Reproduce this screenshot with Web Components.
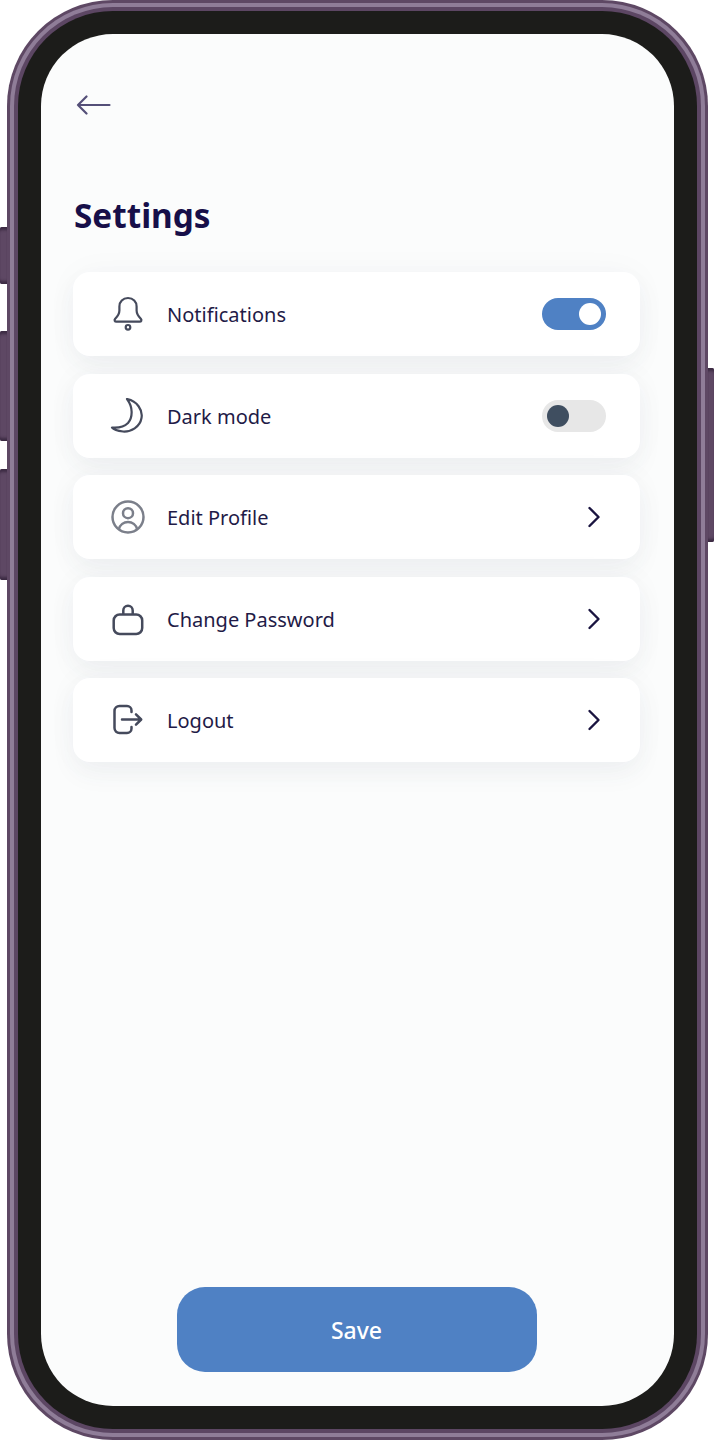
<!DOCTYPE html>
<html>
<head>
<meta charset="utf-8">
<title>Settings</title>
<style>
  html, body { margin: 0; padding: 0; background: #fff; }
  body { font-family: "Noto Sans", "Open Sans", sans-serif; }
</style>
</head>
<body>
<phone-frame>
  <settings-page>
    <settings-row label="Notifications">
      <svg slot="icon" width="36" height="36" viewBox="0 0 36 36" fill="none" stroke="#454a5c" stroke-width="2.200" stroke-linejoin="round">
        <path d="M18 2c-5.200 0-8.600 3.800-8.600 8.400v4.200c0 3.200-2 6-4.200 8.200-1.200 1.300-.5 2.900 1.200 2.900h23.200c1.700 0 2.400-1.600 1.200-2.900-2.200-2.200-4.200-5-4.200-8.200v-4.200C26.600 5.800 23.200 2 18 2z"/>
        <circle cx="18" cy="31.300" r="2.300"/>
      </svg>
      <toggle-switch slot="action" on></toggle-switch>
    </settings-row>
    <settings-row label="Dark mode">
      <svg slot="icon" width="36" height="36" viewBox="0 0 36 36" fill="none" stroke="#454a5c" stroke-width="2.200" stroke-linejoin="round">
        <path d="M17 1C27 3 33 12 31.500 20 30 29 21 34 13 33.500 8 33 4 32 2 29.500 8 30 14 29 18 25 23 19 23 9 17 1z"/>
      </svg>
      <toggle-switch slot="action"></toggle-switch>
    </settings-row>
    <settings-row label="Edit Profile">
      <svg slot="icon" width="36" height="36" viewBox="0 0 36 36" fill="none" stroke="#7b7f8a" stroke-width="2.500">
        <circle cx="18" cy="18" r="15.500"/>
        <circle cx="18" cy="14.200" r="5"/>
        <path d="M8.800 30.500c1-4.700 5-7.500 9.200-7.500s8.200 2.800 9.200 7.500"/>
      </svg>
      <row-chevron slot="action"></row-chevron>
    </settings-row>
    <settings-row label="Change Password">
      <svg slot="icon" width="36" height="36" viewBox="0 0 36 36" fill="none" stroke="#454a5c" stroke-width="2.500">
        <rect x="3.700" y="13.500" width="28.500" height="19.500" rx="6"/>
        <path d="M13.300 13.500v-4a4.700 4.700 0 0 1 9.400 0v4"/>
      </svg>
      <row-chevron slot="action"></row-chevron>
    </settings-row>
    <settings-row label="Logout">
      <svg slot="icon" width="36" height="36" viewBox="0 0 36 36" fill="none" stroke="#454a5c" stroke-width="2.500" stroke-linecap="round" stroke-linejoin="round">
        <path d="M21.500 10V8.500A4.500 4.500 0 0 0 17 4H9.500a5 5 0 0 0-5 5v17a5 5 0 0 0 5 5H17a4.500 4.500 0 0 0 4.500-4.500V25"/>
        <path d="M12 17.500h19M26 12.300l5.200 5.200-5.200 5.200"/>
      </svg>
      <row-chevron slot="action"></row-chevron>
    </settings-row>
    <save-button slot="footer">Save</save-button>
  </settings-page>
</phone-frame>

<script>
class PhoneFrame extends HTMLElement {
  constructor() {
    super();
    this.attachShadow({ mode: 'open' }).innerHTML = `
      <style>
        :host { display: block; position: relative; box-sizing: border-box; width: 701px; height: 1440px; margin-left: 7px; }
        .band { box-sizing: border-box; height: 100%; }
        .outer { background: #5e4864; border-radius: 106px; padding: 3px; }
        .light { background: #8f7d98; border-radius: 103px; padding: 4px; }
        .inner { background: #5c4663; border-radius: 99px; padding: 4px; }
        .bezel { background: #1c1c1a; border-radius: 95px; padding: 23px; }
        .screen { height: 100%; border-radius: 72px; overflow: hidden; background: #fbfcfc; }
        .side { position: absolute; width: 7px; background: #5e4864; box-shadow: inset 0 5px 3px -2px #3c2b43, inset 0 -5px 3px -2px #3c2b43; }
        .left { left: -7px; border-radius: 2px 0 0 2px; }
        .right { right: -6px; width: 6px; border-radius: 0 2px 2px 0; }
      </style>
      <div class="side left" style="top:227px;height:57px"></div>
      <div class="side left" style="top:331px;height:110px"></div>
      <div class="side left" style="top:469px;height:111px"></div>
      <div class="side right" style="top:368px;height:174px"></div>
      <div class="band outer"><div class="band light"><div class="band inner"><div class="band bezel">
        <div class="screen"><slot></slot></div>
      </div></div></div></div>`;
  }
}

class SettingsPage extends HTMLElement {
  constructor() {
    super();
    this.attachShadow({ mode: 'open' }).innerHTML = `
      <style>
        :host { display: flex; flex-direction: column; box-sizing: border-box; height: 100%; padding: 61px 34px 34px 32px; }
        .back { display: block; margin-left: 3px; }
        h1 { margin: 77px 0 0 1px; font: 700 33.300px/46px "Noto Sans", "Open Sans", sans-serif; color: #170f49; }
        .list { display: flex; flex-direction: column; gap: 17.500px; margin-top: 34px; }
        .footer { margin-top: auto; display: flex; justify-content: center; }
      </style>
      <svg class="back" width="36" height="20" viewBox="0 0 36 20" fill="none" stroke="#544f78" stroke-width="2.200" stroke-linecap="round" stroke-linejoin="round">
        <path d="M2 10h31.500M10.500 1.500 2 10l8.500 8.500"/>
      </svg>
      <h1>Settings</h1>
      <div class="list"><slot></slot></div>
      <div class="footer"><slot name="footer"></slot></div>`;
  }
}

class SettingsRow extends HTMLElement {
  constructor() {
    super();
    this.attachShadow({ mode: 'open' }).innerHTML = `
      <style>
        :host { display: flex; align-items: center; box-sizing: border-box; height: 84px; padding: 0 34px 0 37px; background: #fff; border-radius: 17px; box-shadow: 0 0 34px rgba(50, 70, 100, .03), 0 12px 26px rgba(50, 70, 100, .05); }
        .icon { display: flex; width: 36px; height: 36px; flex: none; }
        .label { flex: 1; margin-left: 21px; padding-top: 1px; font-size: 20px; color: #1f1b47; }
      </style>
      <span class="icon"><slot name="icon"></slot></span>
      <span class="label"></span>
      <slot name="action"></slot>`;
    this.shadowRoot.querySelector('.label').textContent = this.getAttribute('label');
  }
}

class ToggleSwitch extends HTMLElement {
  constructor() {
    super();
    this.attachShadow({ mode: 'open' }).innerHTML = `
      <style>
        :host { display: flex; align-items: center; box-sizing: border-box; width: 64px; height: 32px; padding: 0 5px; border-radius: 16px; background: #e7e7e7; }
        :host([on]) { background: #4f81c4; justify-content: flex-end; }
        .knob { width: 22px; height: 22px; border-radius: 50%; background: #3f4e60; }
        :host([on]) .knob { background: #fff; }
      </style>
      <div class="knob"></div>`;
  }
}

class RowChevron extends HTMLElement {
  constructor() {
    super();
    this.attachShadow({ mode: 'open' }).innerHTML = `
      <style>
        :host { display: block; width: 14px; height: 22px; margin-right: 5px; }
        svg { display: block; }
      </style>
      <svg width="14" height="22" viewBox="0 0 14 22" fill="none" stroke="#1a1440" stroke-width="2.400" stroke-linecap="round" stroke-linejoin="round">
        <path d="M2.500 2l9 9-9 9"/>
      </svg>`;
  }
}

class SaveButton extends HTMLElement {
  constructor() {
    super();
    this.attachShadow({ mode: 'open' }).innerHTML = `
      <style>
        :host { display: flex; align-items: center; justify-content: center; box-sizing: border-box; width: 360px; height: 85px; padding-top: 1px; border-radius: 28px; background: #4f81c4; color: #fff; font-size: 23px; font-weight: 500; }
      </style>
      <slot></slot>`;
  }
}

customElements.define('phone-frame', PhoneFrame);
customElements.define('settings-page', SettingsPage);
customElements.define('settings-row', SettingsRow);
customElements.define('toggle-switch', ToggleSwitch);
customElements.define('row-chevron', RowChevron);
customElements.define('save-button', SaveButton);
</script>
</body>
</html>
